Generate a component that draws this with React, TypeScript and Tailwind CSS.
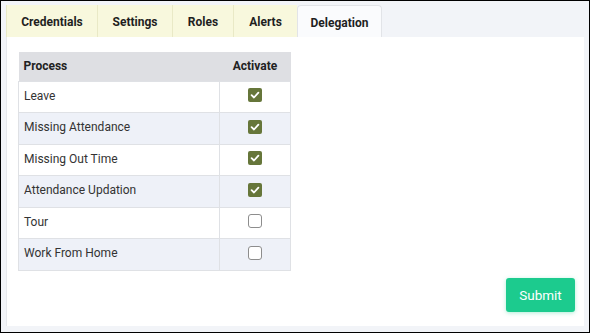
import { useState } from 'react';

const tabs = [
  { name: 'Credentials', w: 'w-[91px]' },
  { name: 'Settings', w: 'w-[75px]' },
  { name: 'Roles', w: 'w-[61px]' },
  { name: 'Alerts', w: 'w-[64px]' },
  { name: 'Delegation', w: 'w-[85px]' },
];

const initialRows = [
  { name: 'Leave', on: true },
  { name: 'Missing Attendance', on: true },
  { name: 'Missing Out Time', on: true },
  { name: 'Attendance Updation', on: true },
  { name: 'Tour', on: false },
  { name: 'Work From Home', on: false },
];

function Check({ on, onClick }: { on: boolean; onClick: () => void }) {
  if (on) {
    return (
      <button onClick={onClick} className="w-[14px] h-[14px] rounded-[2px] bg-[#66763a] flex items-center justify-center">
        <svg width="10" height="10" viewBox="0 0 10 10">
          <path d="M1.6 5.2 L4 7.5 L8.4 2.6" fill="none" stroke="white" strokeWidth="1.8" strokeLinecap="round" strokeLinejoin="round" />
        </svg>
      </button>
    );
  }
  return <button onClick={onClick} className="w-[14px] h-[14px] rounded-[3px] border border-[#8d8d8d] bg-white" />;
}

export default function App() {
  const [active, setActive] = useState('Delegation');
  const [rows, setRows] = useState(initialRows);

  const toggle = (i: number) =>
    setRows(rows.map((r, j) => (j === i ? { ...r, on: !r.on } : r)));

  return (
    <div className="w-[590px] h-[333px] border border-black bg-[#f2f4f8] flex flex-col pl-[5px] pt-[4px] pr-[5px] pb-[6px] font-['Roboto',_'Liberation_Sans',_sans-serif]">
      {/* tab strip */}
      <div className="flex h-[32px] shrink-0">
        {tabs.map((t) => {
          const isActive = t.name === active;
          return (
            <button
              key={t.name}
              onClick={() => setActive(t.name)}
              className={
                isActive
                  ? `${t.w} h-full pt-[2px] bg-[#fafbfd] border border-b-0 border-[#e2e4e8] rounded-t-[4px] text-[12px] font-bold text-[#1f1f1f]`
                  : `${t.w} h-full pt-[2px] bg-[#f8f8dd] border-l border-[#e9e9c6] text-[12px] font-bold text-[#1f1f1f]`
              }
            >
              {t.name}
            </button>
          );
        })}
      </div>

      {/* panel */}
      <div className="flex-1 bg-white border-l border-[#e6e8ec] flex flex-col pl-[11px] pt-[15px] pr-[9px] pb-[14px]">
        <table className="w-[273px] border-collapse text-[12px] text-[#333]">
          <thead>
            <tr className="h-[29px] bg-[#dedfe3]">
              <th className="w-[201px] text-left pl-[5px] font-bold text-[#222]">Process</th>
              <th className="text-center font-bold text-[#222]">Activate</th>
            </tr>
          </thead>
          <tbody>
            {rows.map((r, i) => (
              <tr key={r.name} className={`h-[31.5px] ${i % 2 === 1 ? 'bg-[#eef1f8]' : 'bg-white'}`}>
                <td className="pl-[5px] pb-[2px] border border-[#dfe1e5]">{r.name}</td>
                <td className="pb-[3px] border border-[#dfe1e5]">
                  <div className="flex justify-center">
                    <Check on={r.on} onClick={() => toggle(i)} />
                  </div>
                </td>
              </tr>
            ))}
          </tbody>
        </table>

        <div className="flex-1" />
        <div className="flex justify-end">
          <button className="w-[69px] h-[34px] rounded-[3px] bg-[#1ccb8e] text-white text-[13.5px] shadow-[0_1px_4px_rgba(28,203,142,0.35)]">
            Submit
          </button>
        </div>
      </div>
    </div>
  );
}
